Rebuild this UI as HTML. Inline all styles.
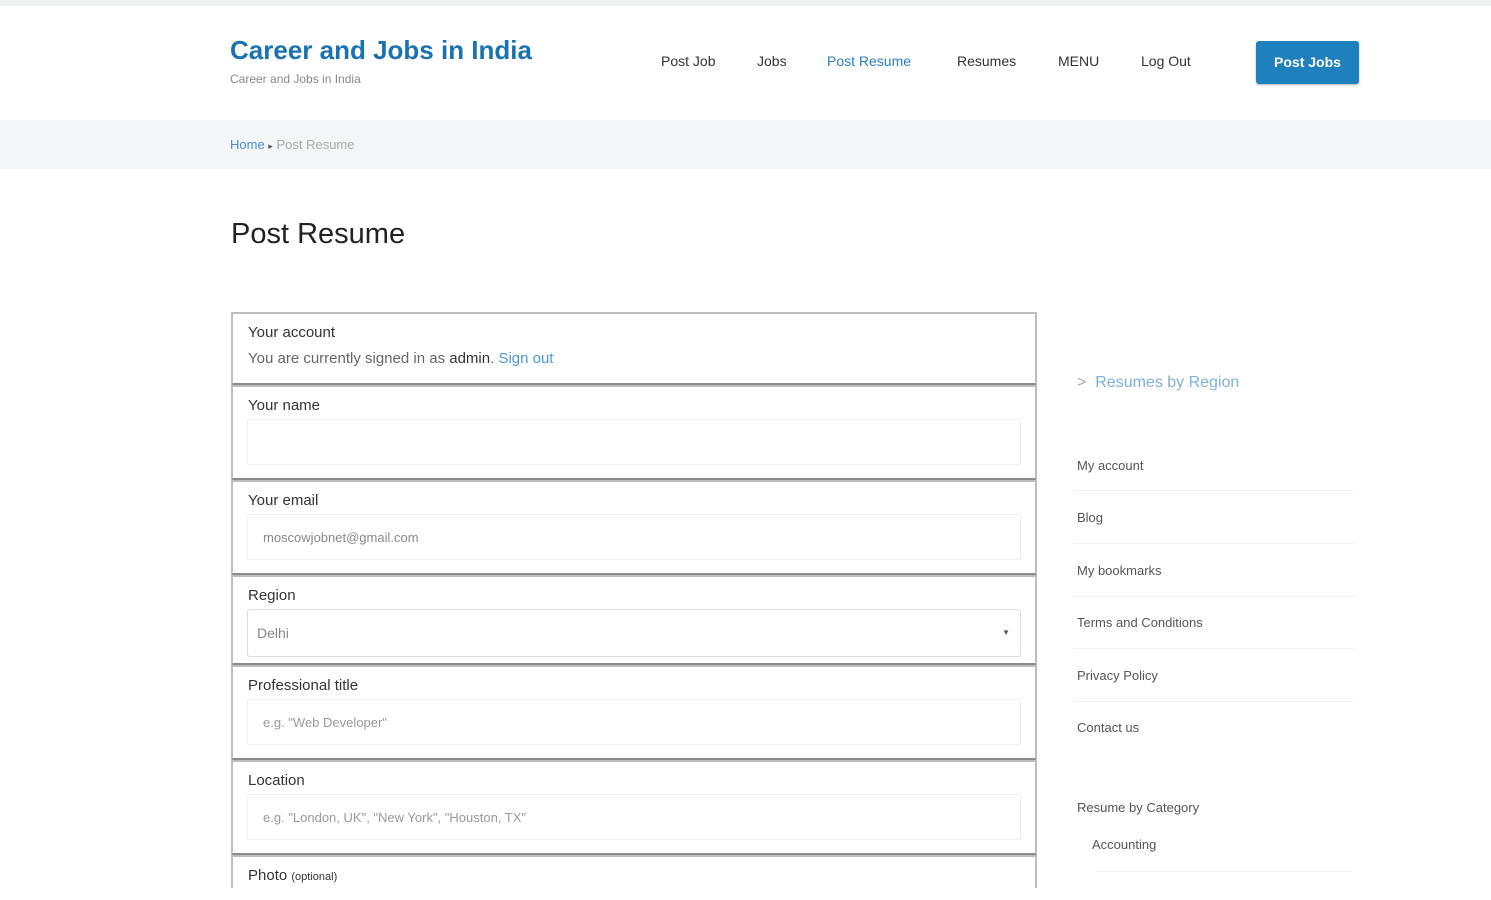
<!DOCTYPE html>
<html><head><meta charset="utf-8">
<style>
*{box-sizing:border-box;margin:0;padding:0}
html,body{width:1491px;height:900px;overflow:hidden}
body{background:#fff;font-family:"Liberation Sans",sans-serif;color:#333;position:relative}
.a{position:absolute;white-space:nowrap}
.topbar{position:absolute;left:0;top:0;width:1491px;height:6px;background:#f1f2f4}
.crumb{position:absolute;left:0;top:120px;width:1491px;height:49px;background:#f4f5f7}
.nav{font-size:14px;color:#333;top:53px}
.box{position:absolute;left:231px;width:806px;border:2px solid #bdbdbd;border-bottom:3px solid #8a8a8a;background:#fff}
.lbl{position:absolute;left:15px;font-size:15px;color:#333}
.inp{position:absolute;left:14px;right:14px;border:1px solid #f0f0f0;background:#fff;font-size:13px;color:#888;padding-left:15px}
.side{font-size:13px;color:#555;left:1077px}
.sl{position:absolute;left:1073px;width:282px;height:1px;background:#f0f0f0}
</style></head><body>
<div class="topbar"></div>
<div class="a" style="left:230px;top:35px;font-size:26px;font-weight:bold;color:#1a73b0">Career and Jobs in India</div>
<div class="a" style="left:230px;top:72px;font-size:12px;color:#888">Career and Jobs in India</div>
<div class="a nav" style="left:661px">Post Job</div>
<div class="a nav" style="left:757px">Jobs</div>
<div class="a nav" style="left:827px;color:#2a7fc0">Post Resume</div>
<div class="a nav" style="left:957px">Resumes</div>
<div class="a nav" style="left:1058px">MENU</div>
<div class="a nav" style="left:1141px">Log Out</div>
<div class="a" style="left:1256px;top:41px;width:103px;height:43px;background:#1e80bd;border-radius:3px;color:#fff;font-weight:bold;font-size:14px;text-align:center;line-height:43px;box-shadow:0 1px 2px rgba(0,0,0,.3)">Post Jobs</div>
<div class="crumb"></div>
<div class="a" style="left:230px;top:137px;font-size:13px;color:#4a8ccc">Home <span style="color:#555;font-size:9px">&#9656;</span> <span style="color:#aaa">Post Resume</span></div>
<div class="a" style="left:231px;top:218px;font-size:29px;color:#222">Post Resume</div>

<div class="box" style="top:312px;height:74px">
<div class="lbl" style="top:10px">Your account</div>
<div class="lbl" style="top:36px;color:#666">You are currently signed in as <span style="color:#333">admin</span>. <span style="color:#4a9ad8">Sign out</span></div>
</div>
<div class="box" style="top:385px;height:96px">
<div class="lbl" style="top:10px">Your name</div>
<div class="inp" style="top:32px;height:46px"></div>
</div>
<div class="box" style="top:480px;height:96px">
<div class="lbl" style="top:10px">Your email</div>
<div class="inp" style="top:32px;height:46px;line-height:46px">moscowjobnet@gmail.com</div>
</div>
<div class="box" style="top:575px;height:91px">
<div class="lbl" style="top:10px">Region</div>
<div class="inp" style="top:32px;height:48px;line-height:46px;border:1px solid #ddd;border-radius:3px;padding-left:9px;color:#888;font-size:14px">Delhi<span style="position:absolute;right:10px;font-size:8px;color:#555">&#9660;</span></div>
</div>
<div class="box" style="top:665px;height:96px">
<div class="lbl" style="top:10px">Professional title</div>
<div class="inp" style="top:32px;height:46px;line-height:46px;color:#999">e.g. "Web Developer"</div>
</div>
<div class="box" style="top:760px;height:96px">
<div class="lbl" style="top:10px">Location</div>
<div class="inp" style="top:32px;height:46px;line-height:46px;color:#999">e.g. "London, UK", "New York", "Houston, TX"</div>
</div>
<div class="box" style="top:855px;height:33px;border-bottom:none">
<div class="lbl" style="top:10px">Photo <span style="font-size:11px">(optional)</span></div>
</div>

<div class="a" style="left:1077px;top:374px;font-size:16px;color:#7fb0d8"><span style="color:#aaa">&gt;</span>&nbsp; Resumes by Region</div>
<div class="a side" style="top:458px">My account</div><div class="sl" style="top:490px"></div>
<div class="a side" style="top:510px">Blog</div><div class="sl" style="top:543px"></div>
<div class="a side" style="top:563px">My bookmarks</div><div class="sl" style="top:596px"></div>
<div class="a side" style="top:615px">Terms and Conditions</div><div class="sl" style="top:648px"></div>
<div class="a side" style="top:668px">Privacy Policy</div><div class="sl" style="top:701px"></div>
<div class="a side" style="top:720px">Contact us</div>
<div class="a side" style="top:800px">Resume by Category</div>
<div class="a side" style="top:837px;left:1092px">Accounting</div><div class="sl" style="top:871px;left:1095px;width:258px"></div>
</body></html>
